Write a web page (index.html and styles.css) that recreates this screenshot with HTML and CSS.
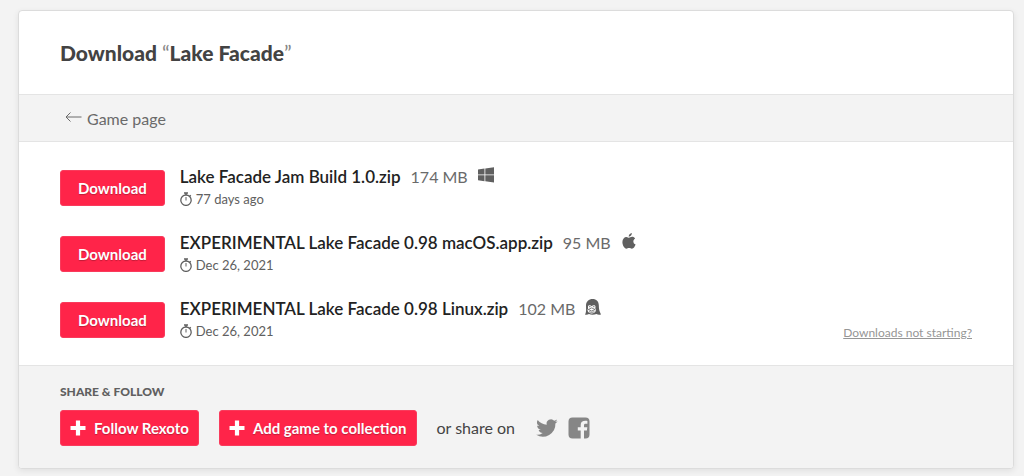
FILE: index.html
```html
<!DOCTYPE html>
<html lang="en">

<head>
    <meta charset="utf-8">
    <meta name="viewport" content="width=device-width, initial-scale=1.0">
    <title>Download Lake Facade</title>
    <link rel="stylesheet" href="styles.css">
</head>

<body>
    <!-- Shared icon shapes -->
    <svg class="sprite" aria-hidden="true">
        <symbol id="stopwatch" viewBox="0 0 12 14">
            <path d="M4 1h4M6 1v2M9.700 3.200l1 1" fill="none" stroke="currentColor" stroke-width="1.500" />
            <circle cx="6" cy="8.200" r="5.200" fill="none" stroke="currentColor" stroke-width="1.300" />
            <path d="M6 5v3.500" stroke="currentColor" />
        </symbol>
        <symbol id="plus" viewBox="0 0 16 16">
            <path d="M5.900 .500h4.200v5.400h5.400v4.200h-5.400v5.400H5.900v-5.400H.500V5.900h5.400z" fill="currentColor" />
        </symbol>
    </svg>

    <main class="card">
        <header class="header">
            <h1>Download <span class="quote">“</span>Lake Facade<span class="quote">”</span></h1>
        </header>

        <nav class="nav">
            <a class="back" href="#">
                <svg class="arrow" viewBox="0 0 17 10"><path d="M5.500 .500L1 5l4.500 4.500M1 5h15.500" fill="none" stroke="currentColor" /></svg>
                Game page
            </a>
        </nav>

        <section class="downloads">
            <div class="uploads">
                <div class="upload">
                    <button class="button" type="button">Download</button>
                    <div class="info">
                        <div class="file">
                            <strong class="name">Lake Facade Jam Build 1.0.zip</strong>
                            <span class="size">174 MB</span>
                            <svg class="platform" viewBox="0 0 16 16"><path d="M0 2.500l6.500-.900v5.900H0zM7.300 1.500L16 .300v7.200H7.300zM0 8.300h6.500v5.900L0 13.300zM7.300 8.300H16v7.200l-8.700-1.200z" fill="currentColor" /></svg>
                        </div>
                        <div class="date"><svg class="clock"><use href="#stopwatch" /></svg>77 days ago</div>
                    </div>
                </div>

                <div class="upload">
                    <button class="button" type="button">Download</button>
                    <div class="info">
                        <div class="file">
                            <strong class="name">EXPERIMENTAL Lake Facade 0.98 macOS.app.zip</strong>
                            <span class="size">95 MB</span>
                            <svg class="platform" viewBox="0 0 16 16"><path d="M10.900 0c.100 1.900-1.300 3.600-3.200 3.700C7.500 1.900 9.100.200 10.900 0zM8 4.700c.700 0 1.700-.900 3.100-.900 1.300 0 2.400.700 3 1.600-2.500 1.500-2.200 5 .500 6.100-.800 2.100-2.100 4.200-3.700 4.200-1.100 0-1.500-.600-2.800-.600-1.300 0-1.700.600-2.700.600-2.100 0-4-3.500-4-6.600 0-3.200 1.900-5.200 4-5.200 1.200 0 2 .800 2.600.800z" fill="currentColor" /></svg>
                        </div>
                        <div class="date"><svg class="clock"><use href="#stopwatch" /></svg>Dec 26, 2021</div>
                    </div>
                </div>

                <div class="upload">
                    <button class="button" type="button">Download</button>
                    <div class="info">
                        <div class="file">
                            <strong class="name">EXPERIMENTAL Lake Facade 0.98 Linux.zip</strong>
                            <span class="size">102 MB</span>
                            <svg class="platform" viewBox="0 0 16 16">
                                <path d="M0 15.500C1.500 13 1 10 1 6.500 1 2.500 4 0 7.500 0 11.500 0 13.600 2.400 13.800 6c.100 4 .400 6 2.200 9.500-2 .700-3.500.300-4.500-.500-2.500 1-5.500 1-7.500 0-1 .700-3 .900-4 .500z" fill="currentColor" />
                                <path d="M3 7.500c.200-1.700 2.800-1.700 3.700-.200C7.600 5.800 10.300 5.800 10.500 7.500c.100 1-.300 1.400-.100 2.300 1 1.500.500 4.500-3.700 4.700C2.700 14.300 2 11.300 3 9.800 3.200 8.900 2.900 8.500 3 7.500z" fill="#fff" />
                                <path d="M4 7.700h1.600M7.900 7.700h1.600M3.300 10.500l3.400-1.600 3.400 1.600-3.400 1.500zM4 12.800q2.800 1.100 5.400 0" fill="none" stroke="currentColor" stroke-width=".800" />
                            </svg>
                        </div>
                        <div class="date"><svg class="clock"><use href="#stopwatch" /></svg>Dec 26, 2021</div>
                    </div>
                </div>
            </div>
            <a class="help" href="#">Downloads not starting?</a>
        </section>

        <footer class="footer">
            <h2>Share &amp; Follow</h2>
            <div class="actions">
                <button class="button follow" type="button"><svg class="plus"><use href="#plus" /></svg>Follow Rexoto</button>
                <button class="button follow" type="button"><svg class="plus"><use href="#plus" /></svg>Add game to collection</button>
                <span class="share">or share on</span>
                <div class="social">
                    <a href="#" aria-label="Twitter"><svg viewBox="0 0 24 24"><path d="M22.600 5.300c-.800.400-1.600.600-2.500.700.900-.500 1.600-1.400 1.900-2.400-.800.500-1.800.900-2.800 1.100a4.400 4.400 0 0 0-7.500 4A12.500 12.500 0 0 1 2.700 4.100a4.400 4.400 0 0 0 1.400 5.900c-.700 0-1.400-.200-2-.600 0 2.200 1.500 4 3.500 4.400-.600.200-1.300.200-2 .100.600 1.700 2.200 3 4.100 3A8.900 8.900 0 0 1 1.200 18.800 12.600 12.600 0 0 0 20.400 7.600c.900-.600 1.600-1.400 2.200-2.300z" fill="currentColor" /></svg></a>
                    <a href="#" aria-label="Facebook"><svg viewBox="0 0 24 24"><path d="M5.500 1.500h13a4 4 0 0 1 4 4v13a4 4 0 0 1-4 4H17v-8h2.900l.400-3.200H17V9.200c0-1 .400-1.500 1.700-1.500h1.700V4.900c-4.200-.700-6.700.700-6.700 4v2.400h-2.900v3.200h2.900v8H5.500a4 4 0 0 1-4-4v-13a4 4 0 0 1 4-4z" fill="currentColor" /></svg></a>
                </div>
            </div>
        </footer>
    </main>
</body>

</html>
```
FILE: styles.css
```css
* {
    box-sizing: border-box;
}

body {
    margin: 0;
    padding: 10px 10px 8px 18px;
    background: #f3f3f3;
    color: #434343;
    font-family: Lato, "Liberation Sans", sans-serif;
    font-size: 16px;
    line-height: 22px;
}

svg {
    display: block;
    flex: none;
}

.sprite {
    position: absolute;
    width: 0;
    height: 0;
}

.card {
    background: #fff;
    border: 1px solid #dcdcdc;
    border-radius: 4px;
    box-shadow: 0 2px 6px rgba(0, 0, 0, 0.08);
    overflow: hidden;
}

.header {
    padding: 28px 41px 27px;
}

h1 {
    margin: 0;
    font-size: 21px;
    font-weight: 900;
    line-height: 28px;
}

.quote {
    color: #868686;
    font-weight: 400;
}

.nav {
    padding: 13px 46px 11px;
    background: #f3f3f3;
    border-top: 1px solid #e4e4e4;
    border-bottom: 1px solid #e4e4e4;
}

.back {
    display: flex;
    gap: 5px;
    color: #6a6a6a;
    text-decoration: none;
}

.arrow {
    width: 17px;
    height: 10px;
    margin-top: 4px;
}

.downloads {
    display: flex;
    justify-content: space-between;
    align-items: flex-end;
    padding: 23px 41px 22px;
}

.uploads {
    display: flex;
    flex-direction: column;
    gap: 22px;
    padding-bottom: 2px;
}

.upload {
    display: flex;
    gap: 15px;
}

.button {
    height: 36px;
    margin: 0;
    padding: 0 17px;
    background: #ff2449;
    border: 1px solid #f93b5c;
    border-radius: 3px;
    color: #fff;
    font-family: inherit;
    font-size: 15px;
    font-weight: 700;
    text-shadow: 0 1px 1px rgba(0, 0, 0, 0.25);
    cursor: pointer;
}

.upload .button {
    margin-top: 5px;
}

.file {
    display: flex;
    gap: 10px;
    line-height: 24px;
}

.name {
    color: #222;
    font-size: 17px;
    font-weight: 600;
}

.size {
    color: #6a6a6a;
}

.platform {
    width: 16px;
    height: 16px;
    margin-top: 2px;
    color: #606060;
}

.date {
    display: flex;
    align-items: center;
    gap: 4px;
    color: #606060;
    font-size: 13px;
    line-height: 20px;
}

.clock {
    width: 12px;
    height: 14px;
}

.help {
    color: #969696;
    font-size: 12px;
    line-height: 20px;
}

.footer {
    padding: 16px 41px 22px;
    background: #f3f3f3;
    border-top: 1px solid #e4e4e4;
}

h2 {
    margin: 0 0 8px;
    color: #606060;
    font-size: 12px;
    font-weight: 900;
    line-height: 20px;
    text-transform: uppercase;
}

.actions {
    display: flex;
    align-items: center;
    gap: 20px;
}

.follow {
    display: flex;
    align-items: center;
    gap: 8px;
    padding: 0 9px;
}

.plus {
    width: 16px;
    height: 16px;
}

.social {
    display: flex;
    gap: 8px;
}

.social a {
    color: #868686;
}

.social svg {
    width: 24px;
    height: 24px;
}
```
